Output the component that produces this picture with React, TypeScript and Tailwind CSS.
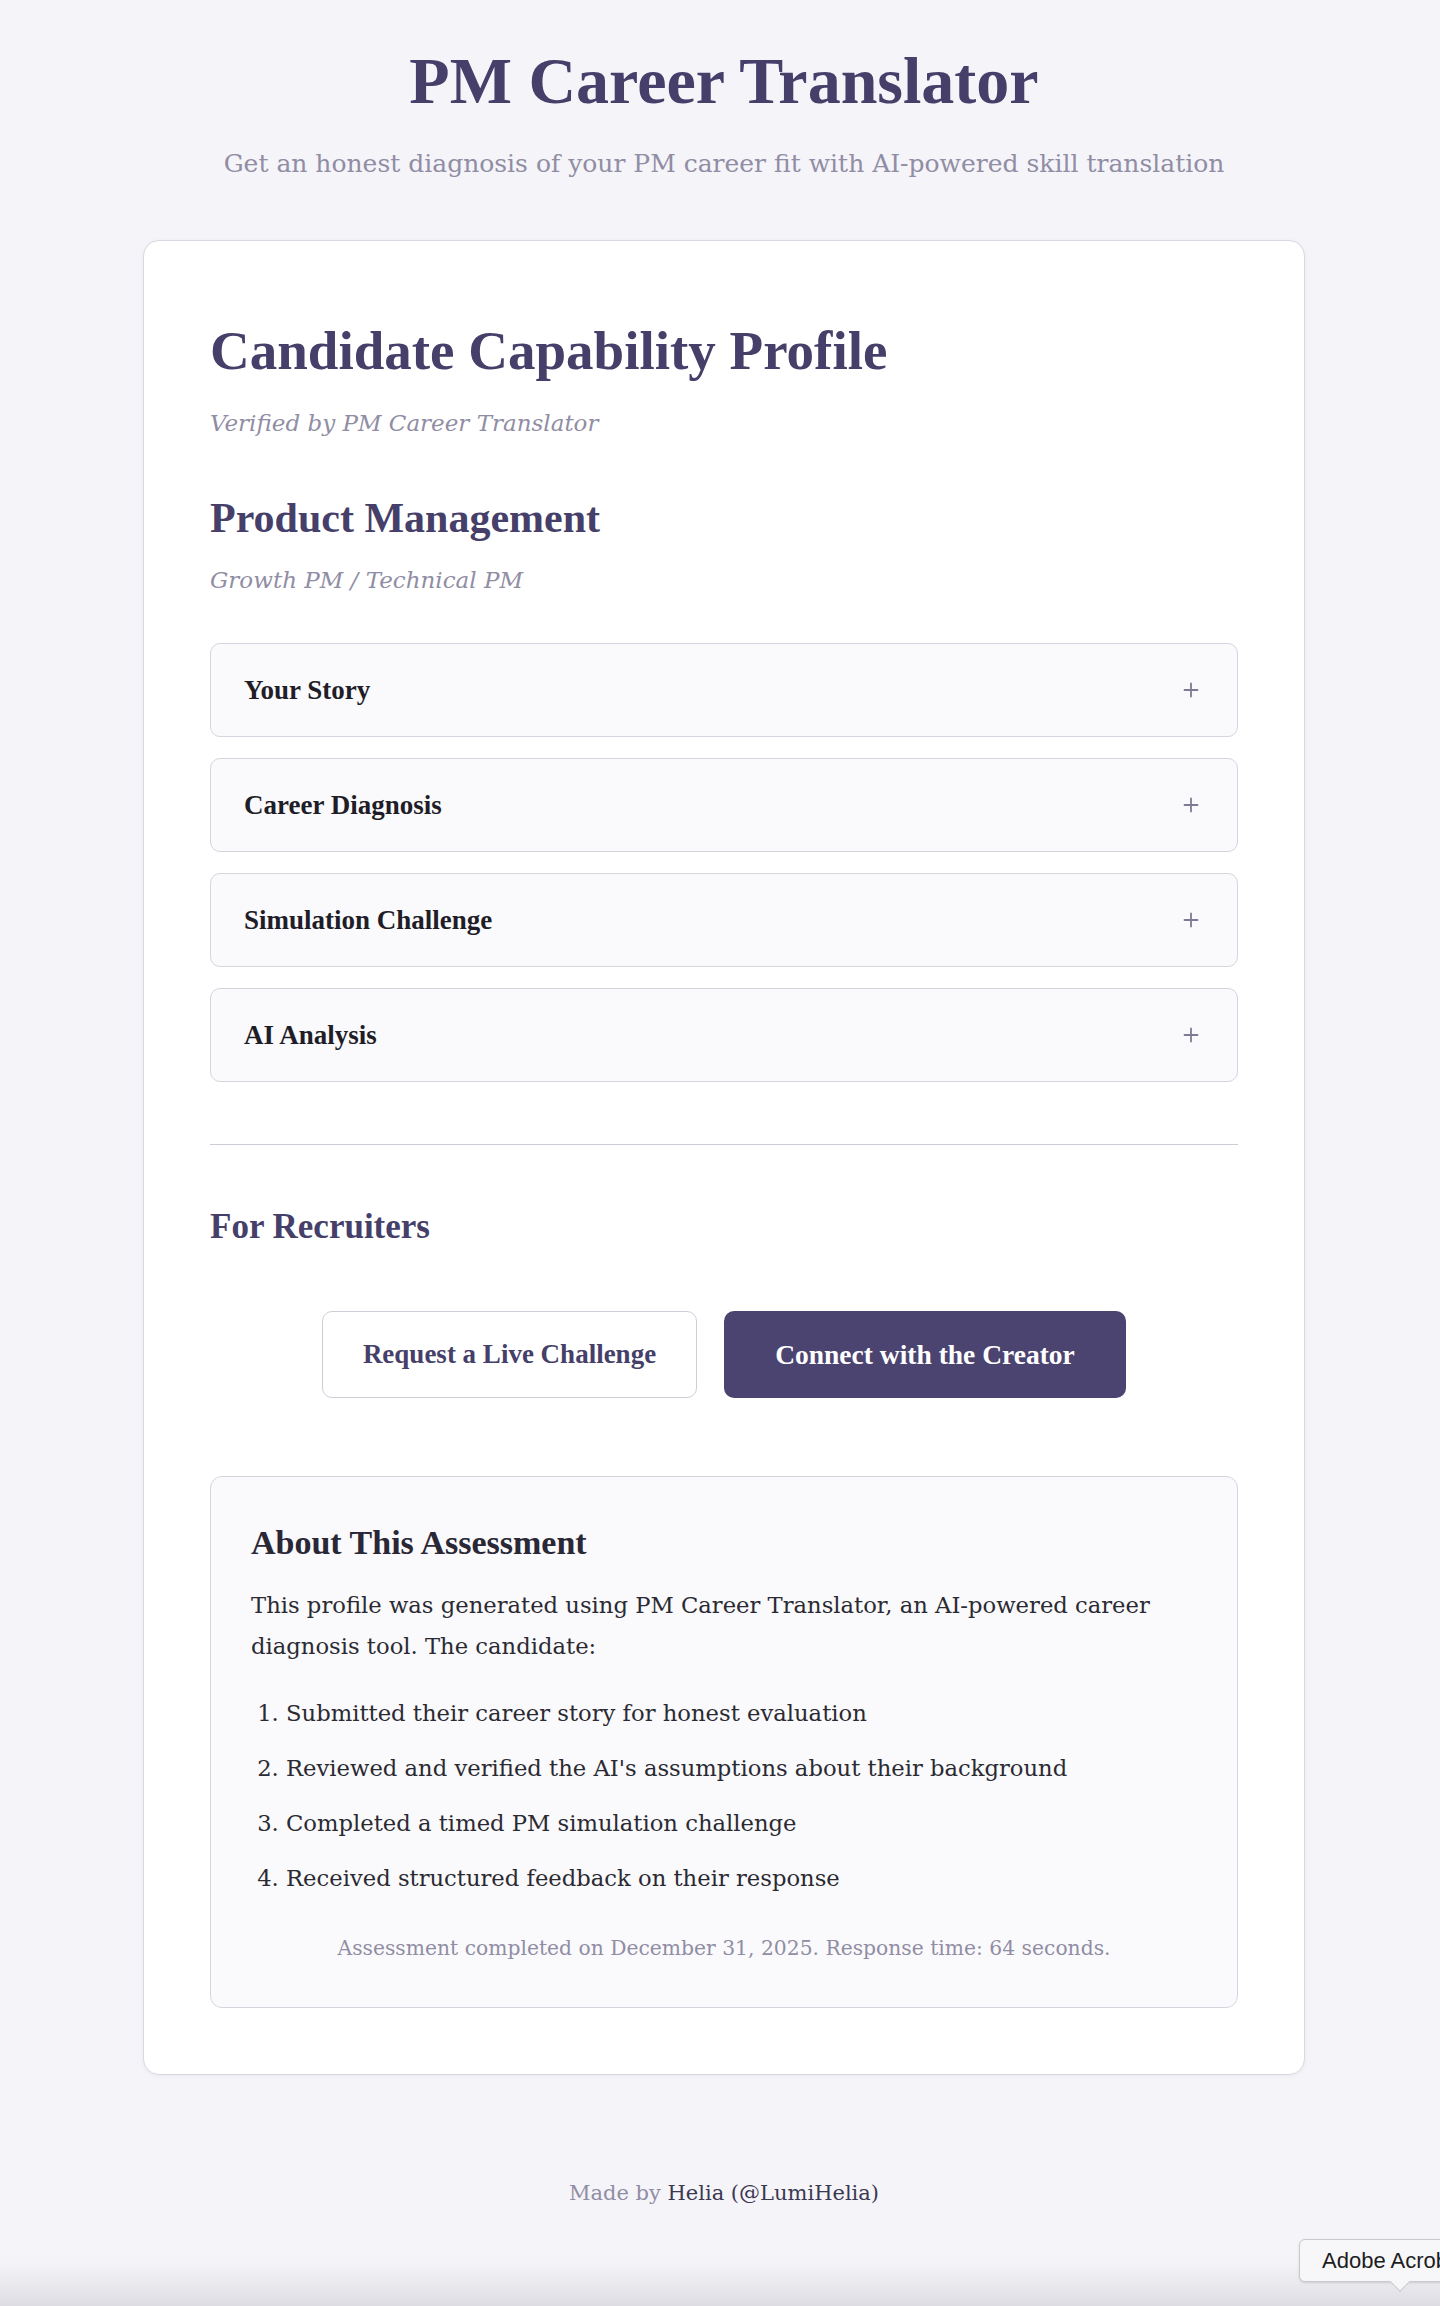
const sections = ['Your Story', 'Career Diagnosis', 'Simulation Challenge', 'AI Analysis']

const steps = [
  'Submitted their career story for honest evaluation',
  "Reviewed and verified the AI's assumptions about their background",
  'Completed a timed PM simulation challenge',
  'Received structured feedback on their response',
]

function PlusIcon() {
  return (
    <svg width="16" height="16" viewBox="0 0 16 16" className="text-[#7d7b93]">
      <path d="M8 1.5v13M1.5 8h13" stroke="currentColor" strokeWidth="1.8" strokeLinecap="round" />
    </svg>
  )
}

export default function App() {
  return (
    <div className="relative min-h-[2306px] w-full overflow-hidden bg-[#f5f4f9] pl-[8px] font-['DejaVu_Serif',serif]">
      <header className="flex flex-col items-center pt-[42px]">
        <h1 className="font-['Liberation_Serif',serif] text-[66px] leading-[78px] font-bold text-[#453f69]">
          PM Career Translator
        </h1>
        <p className="mt-[26px] text-[25px] leading-[36px] text-[#908da4]">
          Get an honest diagnosis of your PM career fit with AI-powered skill translation
        </p>
      </header>

      <main className="mx-auto mt-[58px] w-[1162px] rounded-2xl border border-[#d9d8e0] bg-white px-[66px] pt-[77px] pb-[66px] shadow-[0_1px_4px_rgba(60,55,90,0.06)]">
        <h2 className="font-['Liberation_Serif',serif] text-[55px] leading-[66px] font-bold text-[#453f69]">
          Candidate Capability Profile
        </h2>
        <p className="mt-[23px] text-[23px] leading-[32px] italic text-[#908da4]">Verified by PM Career Translator</p>

        <h3 className="mt-[55px] font-['Liberation_Serif',serif] text-[42px] leading-[48px] font-bold text-[#453f69]">
          Product Management
        </h3>
        <p className="mt-[22px] text-[23px] leading-[32px] italic text-[#908da4]">Growth PM / Technical PM</p>

        <div className="mt-[47px] flex flex-col gap-[21px]">
          {sections.map((s) => (
            <div
              key={s}
              className="flex h-[94px] items-center justify-between rounded-[10px] border border-[#d6d5dd] bg-[#fafafc] pr-[38px] pl-[33px]"
            >
              <span className="font-['Liberation_Serif',serif] text-[27px] font-bold text-[#1f1e28]">{s}</span>
              <PlusIcon />
            </div>
          ))}
        </div>

        <hr className="mt-[62px] border-t border-[#cdccd4]" />

        <h3 className="mt-[61px] font-['Liberation_Serif',serif] text-[35px] leading-[41px] font-bold text-[#453f69]">
          For Recruiters
        </h3>

        <div className="mt-[64px] flex justify-center gap-[27px]">
          <button className="h-[87px] w-[375px] rounded-[10px] border border-[#cfcdd8] bg-white font-['Liberation_Serif',serif] text-[27px] font-bold text-[#453f69]">
            Request a Live Challenge
          </button>
          <button className="h-[87px] w-[402px] rounded-[10px] bg-[#4b4370] font-['Liberation_Serif',serif] text-[27.5px] font-bold text-white">
            Connect with the Creator
          </button>
        </div>

        <section className="mt-[78px] rounded-xl border border-[#d6d5dd] bg-[#fafafc] px-[40px] pt-[46px] pb-[44px]">
          <h4 className="font-['Liberation_Serif',serif] text-[34px] leading-[39px] font-bold text-[#2a2836]">
            About This Assessment
          </h4>
          <p className="mt-[23px] text-[22.7px] leading-[41px] text-[#2b2a33]">
            This profile was generated using PM Career Translator, an AI-powered career diagnosis tool. The candidate:
          </p>
          <ol className="mt-[26px] flex list-decimal flex-col gap-[14px] pl-[35px] text-[22.7px] leading-[41px] text-[#2b2a33]">
            {steps.map((s) => (
              <li key={s}>{s}</li>
            ))}
          </ol>
          <p className="mt-[34px] text-center text-[20.3px] leading-[30px] text-[#908da4]">
            Assessment completed on December 31, 2025. Response time: 64 seconds.
          </p>
        </section>
      </main>

      <footer className="mt-[102px] text-center text-[21px] leading-[32px] text-[#908da4]">
        Made by <span className="text-[#3b3851]">Helia (@LumiHelia)</span>
      </footer>

      <div className="pointer-events-none absolute inset-x-0 bottom-0 h-[44px] bg-gradient-to-b from-transparent to-[#dedde3]" />

      <div className="absolute top-[2239px] left-[1299px]">
        <div className="flex h-[43px] items-center rounded-md border border-[#c9c9cd] bg-[#f7f7f9] pl-[22px] pr-[20px] font-['Liberation_Sans',sans-serif] text-[22px] whitespace-nowrap text-[#1d1d1f] shadow-sm">
          Adobe Acrobat
        </div>
        <div className="absolute top-[36px] left-[94px] h-[14px] w-[14px] rotate-45 border-r border-b border-[#c9c9cd] bg-[#f7f7f9]" />
      </div>
    </div>
  )
}
